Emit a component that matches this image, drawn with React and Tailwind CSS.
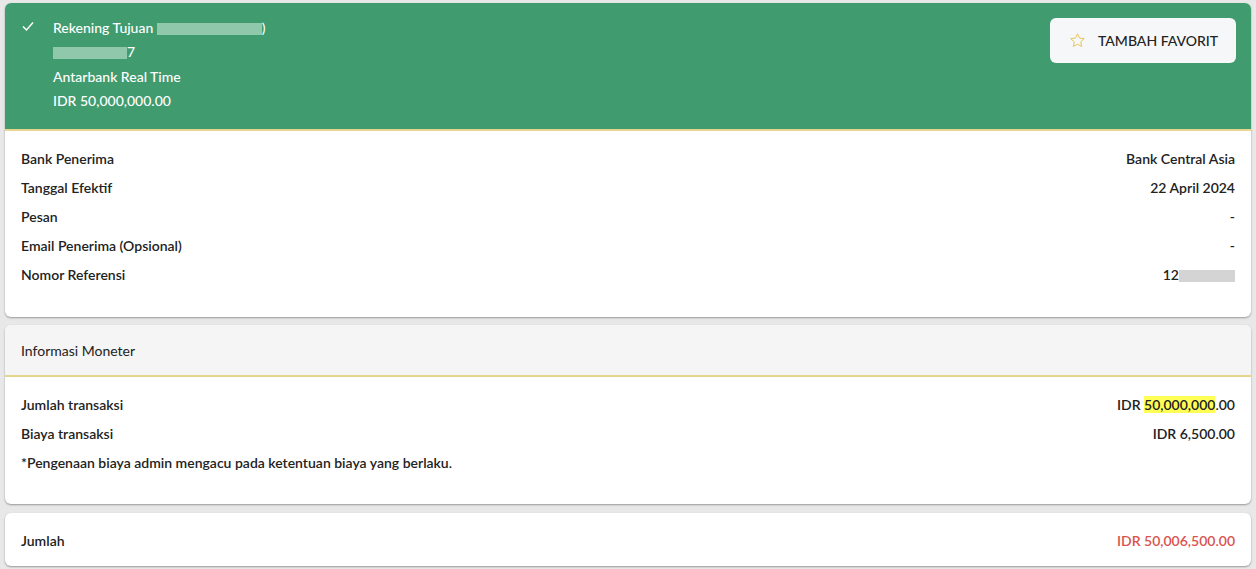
import React from "react";

const font = { fontFamily: "Lato, 'Open Sans', sans-serif" };

function Row({ label, children }) {
  return (
    <div className="flex h-[29px] items-center justify-between">
      <span className="font-semibold">{label}</span>
      <span className="font-semibold">{children}</span>
    </div>
  );
}

function Blur({ w, dark }) {
  return (
    <span
      className={`inline-block h-[12px] align-middle ${dark ? "bg-[#d4d4d4]" : "bg-[#8fc8ab]"}`}
      style={{ width: w }}
    />
  );
}

export default function App() {
  return (
    <div className="min-h-[569px] bg-[#e8e8e8] px-[5px] pt-[3px] text-[14px] text-[#222]" style={font}>
      <div className="overflow-hidden rounded-[6px] bg-white shadow-[0_1px_2px_rgba(0,0,0,0.35)]">
        <div className="flex justify-between border-b-2 border-[#e6d58e] bg-[#409b6f] pl-[16px] pr-[15px] pt-[13px] text-white">
          <div className="flex gap-[18px]">
            <svg width="14" height="14" viewBox="0 0 14 14" className="mt-[3px]">
              <path d="M2 7.5 L5.5 11 L12 3.5" fill="none" stroke="white" strokeWidth="1.5" />
            </svg>
            <div className="flex flex-col font-medium leading-[24px]">
              <span>
                Rekening Tujuan <Blur w={105} />)
              </span>
              <span>
                <Blur w={74} />7
              </span>
              <span className="mt-[1px]">Antarbank Real Time</span>
              <span className="pb-[16px]">IDR 50,000,000.00</span>
            </div>
          </div>
          <button className="mt-[2px] flex h-[45px] w-[186px] items-center gap-[12px] rounded-[6px] bg-[#f6f7f8] pl-[19px] font-medium text-[#222]">
            <svg width="17" height="17" viewBox="0 0 24 24">
              <path
                d="M12 2.5 L14.9 8.6 L21.5 9.4 L16.6 13.9 L17.9 20.5 L12 17.2 L6.1 20.5 L7.4 13.9 L2.5 9.4 L9.1 8.6 Z"
                fill="none"
                stroke="#e8c35a"
                strokeWidth="1.4"
                strokeLinejoin="round"
              />
            </svg>
            TAMBAH FAVORIT
          </button>
        </div>
        <div className="px-[16px] pb-[28px] pt-[13px]">
          <Row label="Bank Penerima">Bank Central Asia</Row>
          <Row label="Tanggal Efektif">22 April 2024</Row>
          <Row label="Pesan">-</Row>
          <Row label="Email Penerima (Opsional)">-</Row>
          <Row label="Nomor Referensi">
            12<Blur w={56} dark />
          </Row>
        </div>
      </div>

      <div className="mt-[8px] overflow-hidden rounded-[6px] bg-white shadow-[0_1px_2px_rgba(0,0,0,0.35)]">
        <div className="flex h-[52px] items-center border-b-2 border-[#e6d58e] bg-[#f5f5f5] px-[16px]">
          Informasi Moneter
        </div>
        <div className="px-[16px] pb-[27px] pt-[13px]">
          <Row label="Jumlah transaksi">
            IDR <span className="bg-[#ffff55]">50,000,000</span>.00
          </Row>
          <Row label="Biaya transaksi">IDR 6,500.00</Row>
          <div className="flex h-[29px] items-center font-semibold">
            *Pengenaan biaya admin mengacu pada ketentuan biaya yang berlaku.
          </div>
        </div>
      </div>

      <div className="mt-[9px] flex h-[53px] items-center justify-between rounded-[6px] bg-white px-[16px] pt-[1px] shadow-[0_1px_2px_rgba(0,0,0,0.35)]">
        <span className="font-semibold">Jumlah</span>
        <span className="font-semibold text-[#d9534f]">IDR 50,006,500.00</span>
      </div>
    </div>
  );
}
